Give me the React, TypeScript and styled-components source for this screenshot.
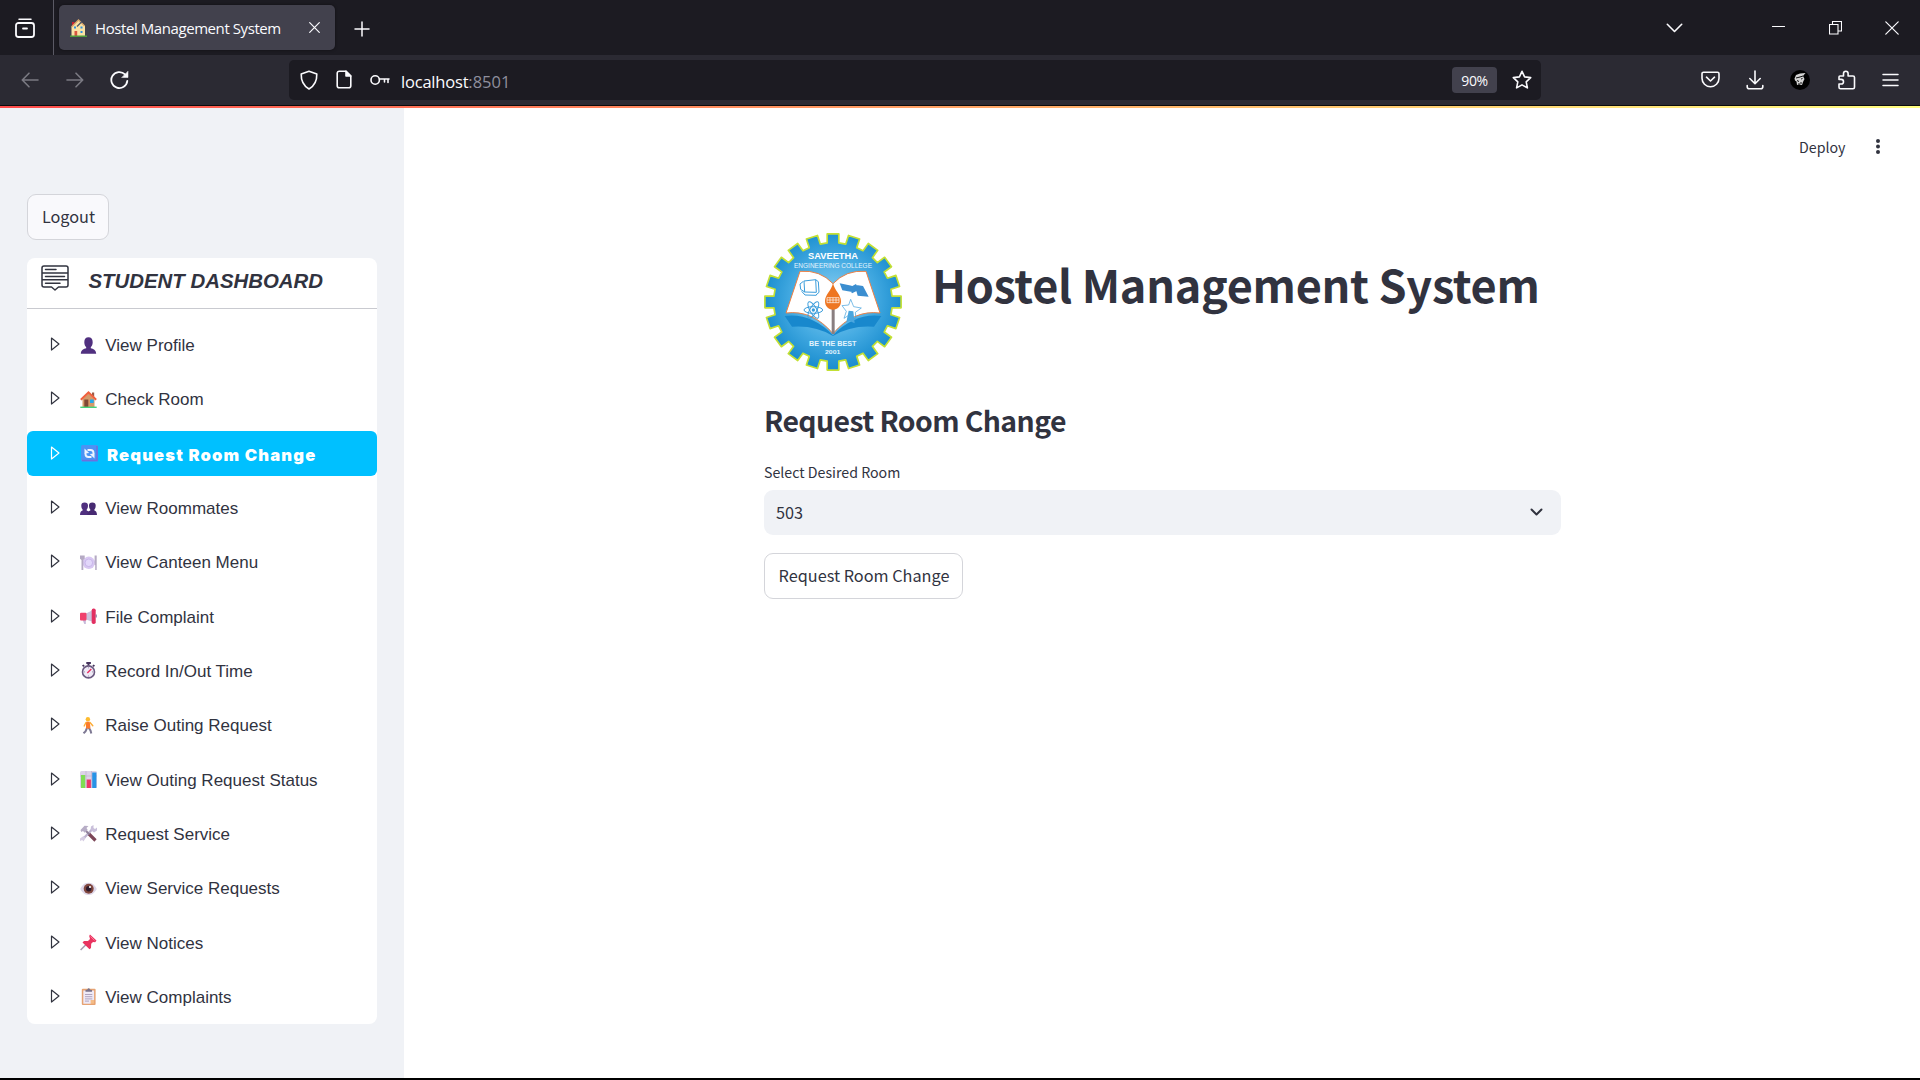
import React from "react";
import styled, { createGlobalStyle } from "styled-components";

const ui = `"Open Sans", "Noto Sans", sans-serif`;
const source = `"Noto Sans CJK SC", "Noto Sans", sans-serif`;
const arial = `"Liberation Sans", Arial, sans-serif`;
const ink = "#31333f";

const Global = createGlobalStyle`
  * { box-sizing: border-box; }
  body { margin: 0; background: #fff; overflow: hidden; }
  button { margin: 0; padding: 0; border: 0; background: none; font: inherit; color: inherit; }
`;

const Window = styled.div`
  width: 1920px;
  height: 1080px;
  display: flex;
  flex-direction: column;
  border-bottom: 2px solid #000;
  overflow: hidden;
`;

const TabStrip = styled.div`
  height: 55px;
  flex: none;
  display: flex;
  align-items: center;
  background: #1c1b22;
  color: #fbfbfe;
`;

const RecentSlot = styled.div`
  width: 54px;
  height: 55px;
  display: flex;
  align-items: center;
  padding-left: 15px;
  border-right: 1px solid #5b5a65;
`;

const Tab = styled.div`
  width: 276px;
  height: 45px;
  margin-left: 5px;
  padding: 0 14px 0 11px;
  display: flex;
  align-items: center;
  border-radius: 5px;
  background: #42414d;
  box-shadow: 0 0 3px rgba(0, 0, 0, 0.5);
`;

const TabTitle = styled.span`
  width: 206px;
  margin: 1px 8px 0 8px;
  font: 400 15px/20px ${ui};
  letter-spacing: -0.42px;
  white-space: nowrap;
`;

const NewTab = styled.button`
  display: flex;
  margin: 3px 0 0 19px;
`;

const WindowControls = styled.div`
  margin-left: auto;
  display: flex;
  align-items: center;
  padding-right: 21px;
`;

const ControlSlot = styled.button<{ $gap: number }>`
  display: flex;
  margin-right: ${(p) => p.$gap}px;
`;

const Toolbar = styled.div`
  height: 51px;
  flex: none;
  display: flex;
  align-items: center;
  padding: 0 21px 1px;
  background: #2b2a33;
  border-bottom: 1px solid #0c0c0d;
  color: #fbfbfe;
`;

const NavButtons = styled.div`
  width: 268px;
  display: flex;
  align-items: center;
  gap: 26.5px;
`;

const UrlBar = styled.div`
  width: 1252px;
  height: 40px;
  display: flex;
  align-items: center;
  padding: 0 9px 0 11px;
  border-radius: 5px;
  background: #1c1b22;
`;

const UrlIcons = styled.div`
  width: 101px;
  display: flex;
  align-items: center;
  gap: 18px;
`;

const Url = styled.span`
  padding-top: 4px;
  font: 400 16.5px/22px ${ui};
  letter-spacing: -0.2px;
  span { color: #8f8f9d; letter-spacing: 0; }
`;

const Zoom = styled.span`
  width: 45px;
  height: 26px;
  margin: 0 15px 0 auto;
  border-radius: 4px;
  background: #42414d;
  font: 400 14px/28px ${ui};
  letter-spacing: -0.4px;
  text-align: center;
`;

const ToolbarActions = styled.div`
  margin-left: auto;
  display: flex;
  align-items: center;
  gap: 26.3px;
`;

const Rainbow = styled.div`
  height: 2px;
  flex: none;
  background: linear-gradient(90deg, #ff4b4b, #fffd80);
`;

const Page = styled.div`
  flex: 1;
  min-height: 0;
  display: flex;
  background: #fff;
  color: ${ink};
`;

const Sidebar = styled.aside`
  width: 404px;
  padding: 86px 27px 0;
  background: #f0f2f6;
`;

const OutlineButton = styled.button<{ $width: number; $bg: string }>`
  display: block;
  width: ${(p) => p.$width}px;
  height: 46px;
  padding: 0 0 1px 1px;
  border: 1px solid #d4d5da;
  border-radius: 9px;
  background: ${(p) => p.$bg};
  font: 400 16.25px/43px ${source};
  white-space: nowrap;
`;

const MenuCard = styled.nav`
  height: 766px;
  margin-top: 18px;
  border-radius: 8px;
  background: #fff;
  font-family: ${arial};
`;

const MenuHeader = styled.div`
  height: 51px;
  display: flex;
  padding: 7px 0 0 13.500px;
  border-bottom: 1px solid #c9cad0;
`;

const MenuTitle = styled.h2`
  margin: 4px 0 0 20px;
  font: italic 700 20.4px/24px ${arial};
  white-space: nowrap;
`;

const MenuList = styled.ul`
  margin: 0;
  padding: 13px 0 0;
  list-style: none;
  display: flex;
  flex-direction: column;
  gap: 9.33px;
`;

const MenuItem = styled.li<{ $active: boolean }>`
  height: 45px;
  display: flex;
  align-items: center;
  padding-left: 23px;
  border-radius: 6px;
  background: ${(p) => (p.$active ? "#00c0ff" : "transparent")};
  color: ${(p) => (p.$active ? "#fff" : ink)};
`;

const Bullet = styled.span`
  display: flex;
  margin-bottom: 1px;
`;

const MenuIcon = styled.span<{ $active: boolean }>`
  display: flex;
  margin: 1px 0 0 ${(p) => (p.$active ? 21 : 20.3)}px;
`;

const MenuLabel = styled.span<{ $active: boolean }>`
  margin-left: ${(p) => (p.$active ? 9 : 8)}px;
  padding-top: 3px;
  font: ${(p) => (p.$active ? `900 16.6px/20px Inter, ${arial}` : `400 17px/20px ${arial}`)};
  letter-spacing: ${(p) => (p.$active ? "1.15px" : "0")};
  white-space: nowrap;
`;

const Main = styled.main`
  flex: 1;
  display: flex;
  flex-direction: column;
`;

const AppHeader = styled.header`
  height: 80px;
  display: flex;
  align-items: center;
  justify-content: flex-end;
  gap: 28px;
  padding: 0 38.500px 2px 0;
  font: 400 14.2px/20px ${source};
`;

const Content = styled.section`
  width: 797px;
  margin: 45px 0 0 360px;
  display: flex;
  flex-direction: column;
`;

const Brand = styled.div`
  display: flex;
  height: 138px;
`;

const AppTitle = styled.h1`
  margin: 16px 0 0 30px;
  font: 700 45px/70px ${source};
  letter-spacing: -0.3px;
  white-space: nowrap;
`;

const SectionTitle = styled.h2`
  margin: 29px 0 0;
  font: 700 28.4px/40px ${source};
  letter-spacing: -0.6px;
  white-space: nowrap;
`;

const FieldLabel = styled.label`
  margin-top: 22px;
  font: 400 14.2px/20px ${source};
`;

const SelectBox = styled.div`
  height: 45px;
  margin: 8px 0 18px;
  padding: 0 18px 0 12px;
  display: flex;
  align-items: center;
  justify-content: space-between;
  border-radius: 9px;
  background: #f0f2f6;
  font: 400 16.3px/24px ${source};
`;

const SelectValue = styled.span`
  padding-bottom: 2px;
`;

type Shape = { w: number; h: number; box?: string; sw?: number; children: React.ReactNode };
const Line = ({ w, h, box, sw = 1.6, children }: Shape) => (
  <svg width={w} height={h} viewBox={box || `0 0 ${w} ${h}`} fill="none" stroke="currentColor" strokeWidth={sw} strokeLinecap="round" strokeLinejoin="round">
    {children}
  </svg>
);

const Emoji = ({ children }: { children: React.ReactNode }) => (
  <svg width="17" height="17" viewBox="0 0 17 17">{children}</svg>
);

const person = "M4.3 5.2C4.3 2 5.8.3 8.5.3s4.2 1.7 4.2 4.9c0 2.300-.8 4-1.900 5v1c2.400.6 5.200 1.700 5.400 5.500H.8c.2-3.800 3-4.900 5.400-5.500v-1c-1.100-1-1.900-2.700-1.900-5z";

const emojis: Record<string, React.ReactNode> = {
  profile: <path d={person} fill="#50307f" />,
  house: (
    <>
      <path d="M2.500 8 8.500 2.500 14.500 8v8h-12z" fill="#d49a6a" />
      <path d="M12 1.500h2.200V6L12 4z" fill="#9c5a45" />
      <path d="M.8 8.800 8.500 1.500l7.700 7.300" fill="none" stroke="#f0603e" strokeWidth="2" />
      <path d="M4.300 8.500h4V16h-4z" fill="#804835" />
      <path d="M10 8.500h3.700v3.500H10z" fill="#28a8ea" />
      <path d="M.3 15.600h16.400V17H.3z" fill="#45d47b" />
    </>
  ),
  refresh: (
    <>
      <rect width="17" height="16.500" rx="1.500" fill="#4b93f3" />
      <path d="M1 15.500h15V1" fill="none" stroke="#6b70dd" strokeWidth="1.500" />
      <path d="M6.500 5h3q3 0 3 3v1M10.500 12h-3q-3 0-3-3V8" fill="none" stroke="#eef4ff" strokeWidth="1.900" />
      <path d="M3.500 3.500v5l4.700-.5zM13.500 13.500v-5l-4.700.5z" fill="#eef4ff" />
    </>
  ),
  mates: (
    <>
      <path d="M1.300 6.600c0-2 1-3.100 3.300-3.100S8 4.600 8 6.600c0 1.900-.5 3.100-1.300 4v.8c1.700.4 3 1.500 3 4.600H0c0-3.100 1.100-4.200 2.600-4.600v-.8c-.8-.9-1.300-2.100-1.300-4z" fill="#50307f" />
      <path d="M9 6.600c0-2 1-3.100 3.300-3.100s3.400 1.100 3.400 3.100c0 1.900-.5 3.100-1.300 4v.8c1.500.4 2.600 1.500 2.600 4.600H7.300c0-3.100 1.300-4.200 3-4.600v-.8C9.500 9.700 9 8.500 9 6.600z" fill="#472a72" />
    </>
  ),
  plate: (
    <>
      <circle cx="8.800" cy="8.800" r="6.200" fill="#d8c7f2" />
      <circle cx="8.800" cy="8.800" r="3.800" fill="#e2d6fa" stroke="#c3b0e6" strokeWidth=".8" />
      <path d="M0 1.500h4.700v3.200L3.300 6v10H1.500V6L0 4.700zM14.600 1.500h2.100V16h-1.500v-5h-.6z" fill="#b5aac4" />
    </>
  ),
  horn: (
    <>
      <path d="M6 5.500 13 2v12L6 11.500z" fill="#cbc2dc" />
      <path d="M2.300 11h3.500v5H4.300z" fill="#c6b9da" />
      <rect y="4.800" width="6.500" height="7.700" rx="1" fill="#f0406c" />
      <rect x="11.700" y=".5" width="4" height="15.500" rx="1.800" fill="#e22f61" />
      <path d="M15.700 6.500h1v3h-1z" fill="#7c6a91" />
    </>
  ),
  timer: (
    <>
      <path d="M6.300 0h4.600v2H9.500v2h-2V2H6.300zM2 3.500l1.500-1 1.200 1.300-1.500 1.200zM15 3.500l-1.500-1-1.200 1.300 1.500 1.200z" fill="#46345d" />
      <circle cx="8.500" cy="9.900" r="6" fill="#efeaf6" stroke="#6b5a80" strokeWidth="1.600" />
      <path d="M8.500 5.300v1M8.500 13.500v1M4 9.900h1M12 9.900h1" stroke="#8a7c9c" strokeWidth=".8" />
      <path d="m7.300 11.100 4-4" stroke="#ed2e63" strokeWidth="1.400" />
    </>
  ),
  walk: (
    <>
      <circle cx="7.900" cy="2.300" r="2.200" fill="#fdbb2e" />
      <path d="m7 11-1.500 3.500-2 1.800M8.500 10.500l2 3 .8 3" fill="none" stroke="#7d7893" strokeWidth="2" />
      <path d="M6 4.700h3.800l.7 6.800H6z" fill="#fb7a2c" />
      <path d="M6 5.500 4.200 9M10 5.500l2.800 3.300" stroke="#fdac35" strokeWidth="1.400" strokeLinecap="round" />
    </>
  ),
  chart: (
    <>
      <rect width="17" height="17" rx="1.500" fill="#ddd3e8" />
      <path d="M0 5h17M6 0v17M11.500 0v17" stroke="#bfb2cf" strokeWidth=".7" />
      <path d="M1 4h4.200v13H1z" fill="#7fdc54" />
      <path d="M6.700 8.500h4.200V17H6.700z" fill="#ec3569" />
      <path d="M12.200 1.500h4.200V17h-4.200z" fill="#2893e6" />
    </>
  ),
  tools: (
    <>
      <path d="m3 14 9.500-10" stroke="#bdb2cf" strokeWidth="2.300" />
      <path d="M10.500 5 11 1.500 13.500 0v3l1.500 1 2-1.500v3L14 7.500z" fill="#c9bfda" />
      <path d="M0 13.500 3.500 11l2 2-2 3.500-1.300-1.500L0 16z" fill="#d6cee3" />
      <path d="m9 9 6.500 6.500" stroke="#7c4657" strokeWidth="3.200" />
      <path d="m5 5 4.500 4.500" stroke="#8f8199" strokeWidth="2" />
      <path d="M.5 5 4.500.8 8.500 1l-2 2 1.200 2-3 2.700-1.700-1.700-1.700 1z" fill="#b7adc6" />
    </>
  ),
  eye: (
    <>
      <path d="M.2 9C3 3.500 6 2.800 8.500 2.800S14 3.500 16.800 9C14 14 11 15 8.500 15S3 14 .2 9z" fill="#ded7e9" />
      <circle cx="8.700" cy="8.800" r="5" fill="#81483f" />
      <circle cx="8.700" cy="8.800" r="2.700" fill="#2d1a2c" />
      <circle cx="10" cy="7" r="1.100" fill="#fff" />
    </>
  ),
  pin: (
    <>
      <path d="m.6 16 6-6" stroke="#a49ab0" strokeWidth="1.500" />
      <path d="m10 .5 6.500 6-1.300 1.700-2.200-.2-1.800 1.800-.2 4.200-1.500 1.200-7-6.700 1.500-1.500 4 .1L10 5 9.200 2z" fill="#e93460" />
      <path d="m10.500 2.500 4 4" stroke="#ff7896" />
    </>
  ),
  clipboard: (
    <>
      <rect x="1.800" y=".7" width="13.800" height="16.300" rx="1" fill="#e6a272" />
      <path d="M3.300 2.500h10.800v9.500l-3.500 3.700H3.300z" fill="#eee9f6" />
      <path d="M5 6.500h7.300M5 8.700h7.300M5 10.900h7.300M5 13.100h4" stroke="#a99cba" strokeWidth=".9" />
      <path d="M14.100 12v3.700h-3.500V12z" fill="#f5bc86" />
      <path d="M5.500 3.700V2l1.700-.3Q8.700-1 10.200 1.700L12 2v1.700z" fill="#79728a" />
    </>
  ),
};

const items: [string, string][] = [
  ["profile", "View Profile"],
  ["house", "Check Room"],
  ["refresh", "Request Room Change"],
  ["mates", "View Roommates"],
  ["plate", "View Canteen Menu"],
  ["horn", "File Complaint"],
  ["timer", "Record In/Out Time"],
  ["walk", "Raise Outing Request"],
  ["chart", "View Outing Request Status"],
  ["tools", "Request Service"],
  ["eye", "View Service Requests"],
  ["pin", "View Notices"],
  ["clipboard", "View Complaints"],
];

const gear = Array.from({ length: 20 }, (_, i) => {
  const point = (deg: number, r: number) => {
    const a = ((i * 18 + deg - 90) * Math.PI) / 180;
    return `${(250 + r * Math.cos(a)).toFixed(1)},${(246 + r * Math.sin(a)).toFixed(1)}`;
  };
  return [point(-5.6, 178), point(-4.9, 205), point(4.9, 205), point(5.6, 178)].join(" ");
}).join(" ");

const CollegeLogo = () => (
  <svg width="138" height="138" viewBox="43 39 414 414">
    <defs>
      <radialGradient id="disc" cx="50%" cy="48%" r="50%">
        <stop offset="0" stopColor="#8fd0f2" />
        <stop offset=".6" stopColor="#45abe2" />
        <stop offset="1" stopColor="#1d8fd0" />
      </radialGradient>
    </defs>
    <polygon points={gear} fill="url(#disc)" stroke="#c3e034" strokeWidth="5" strokeLinejoin="round" />
    <path d="M105 288q80-10 145 58 65-68 145-58l-22 32q-70-5-123 28-53-33-123-28z" fill="#1888cd" />
    <path d="M151 154q60-5 99 37 39-42 99-37l42 125q-80-10-141 62-61-72-141-62z" fill="#fff" stroke="#ee8145" strokeWidth="3" />
    <path d="M246 262h9v80h-9z" fill="#8a7f80" />
    <path d="M250 189c5 24 24 34 24 55 0 15-10 25-24 25s-24-10-24-25c0-21 19-31 24-55z" fill="#ee7622" />
    <path d="M232 233h36v15h-36zM241 233v15M250 233v15M259 233v15M232 240h36" fill="none" stroke="#fff" strokeWidth="2" />
    <g fill="none" stroke="#3b9ddb" strokeWidth="3">
      <path d="M163 183l35-4 8 6 2 32-9 8M163 183l2 33 35 1-2-38M165 216l-12-8-2-16 10-8M156 214l10 11 34 1" />
      <ellipse cx="191" cy="270" rx="28" ry="10" />
      <ellipse cx="191" cy="270" rx="28" ry="10" transform="rotate(60 191 270)" />
      <ellipse cx="191" cy="270" rx="28" ry="10" transform="rotate(120 191 270)" />
      <path d="m303 238 9 22 23 4-18 13 2 22-19-15-17 11 7-21-13-17 20-2z" strokeWidth="2" />
    </g>
    <circle cx="191" cy="270" r="5" fill="#3b9ddb" />
    <path d="m270 190 36 7 6 20-34-6zM315 194l25 4 17 32-33-3zM297 204l22-12 8 18-20 10z" fill="#3b8ed0" />
    <path d="m297 272 14 2 4 36-15-7-10 4z" fill="#4aa6de" />
    <g fill="#fff" textAnchor="middle" fontFamily="Liberation Sans, Arial, sans-serif">
      <text x="250" y="116" fontSize="26" fontWeight="700" textLength="150" lengthAdjust="spacingAndGlyphs">SAVEETHA</text>
      <text x="250" y="143" fontSize="19" textLength="234" lengthAdjust="spacingAndGlyphs" fill="#e4f4fd">ENGINEERING COLLEGE</text>
      <text x="249" y="378" fontSize="19" fontWeight="700" textLength="142" lengthAdjust="spacingAndGlyphs" fill="#e4f4fd">BE THE BEST</text>
      <text x="249" y="402" fontSize="18" fontWeight="700" textLength="46" lengthAdjust="spacingAndGlyphs" fill="#e4f4fd">2001</text>
    </g>
  </svg>
);

const Favicon = () => (
  <svg width="17" height="18" viewBox="0 0 17 18">
    <path d="M2 3h2.500v5H2z" fill="#c4202f" />
    <path d="M1.500 17V8L8.500 1l6.500 6v10z" fill="#fbe2a4" />
    <path d="M1.500 8 8.500 1l6 6" fill="none" stroke="#d9a76b" strokeWidth="1.300" />
    <path d="m7 7.500 5-5" stroke="#4b5568" strokeWidth="1.200" />
    <path d="M4 7.500h2v2H4zM10.500 7.500h2v2h-2zM10.500 12h2v2h-2z" fill="#2f93e0" />
    <path d="M4.500 12h2.700v5H4.500z" fill="#d8553f" />
    <path d="M0 16.500h17V18H0z" fill="#4f9c3c" />
  </svg>
);

export default function App() {
  return (
    <>
      <Global />
      <Window>
        <TabStrip>
          <RecentSlot>
            <Line w={20} h={20} sw={1.8}>
              <path d="M4 1.200h12" strokeWidth="1.500" />
              <path d="M3.500 5h13a2.500 2.500 0 0 1 2.500 2.500v9a2.500 2.500 0 0 1-2.500 2.500h-13A2.500 2.500 0 0 1 1 16.500v-9A2.500 2.500 0 0 1 3.500 5zM8 10.500h4" />
            </Line>
          </RecentSlot>
          <Tab>
            <Favicon />
            <TabTitle>Hostel Management System</TabTitle>
            <Line w={11} h={11} sw={1.200}><path d="m.7.7 9.600 9.600M10.300.7.7 10.300" /></Line>
          </Tab>
          <NewTab><Line w={16} h={16} sw={1.500}><path d="M8 1v14M1 8h14" /></Line></NewTab>
          <WindowControls>
            <ControlSlot $gap={89}><Line w={17} h={10}><path d="m1.300 1.300 7.200 7.200 7.200-7.200" /></Line></ControlSlot>
            <ControlSlot $gap={44}><Line w={13} h={3} sw={1.100}><path d="M.5.500h12" /></Line></ControlSlot>
            <ControlSlot $gap={43}><Line w={13} h={14} sw={1.100}><path d="M.5 3.500h8.500v9.500H.5zM3.500 3.500V.500h9v9.500H9" strokeLinejoin="miter" /></Line></ControlSlot>
            <ControlSlot $gap={0}><Line w={14} h={14} sw={1.200}><path d="m.8.8 12.400 12.400M13.200.8.8 13.200" /></Line></ControlSlot>
          </WindowControls>
        </TabStrip>
        <Toolbar>
          <NavButtons>
            <Line w={18} h={16}><path d="M17 8H1.500M8 1.200 1.300 8 8 14.800" stroke="#7b7a83" /></Line>
            <Line w={18} h={16}><path d="M1 8h15.500M10 1.200 16.700 8 10 14.800" stroke="#7b7a83" /></Line>
            <Line w={20} h={20} sw={1.800}>
              <path d="M17.300 10.800A8 8 0 1 1 15 4.400" />
              <path d="M18 1.500v6h-6z" fill="currentColor" strokeWidth="0.500" />
            </Line>
          </NavButtons>
          <UrlBar>
            <UrlIcons>
              <Line w={18} h={20}><path d="M9 1.200 16.800 4c.2 6.500-1.800 11.500-7.800 15C3 15.500 1 10.500 1.200 4z" /></Line>
              <Line w={16} h={19}>
                <path d="M3 1.200h7L14.800 6v9.800a2 2 0 0 1-2 2H3.200a2 2 0 0 1-2-2V3.200a2 2 0 0 1 2-2z" />
                <path d="M10 1.200V6h4.800z" fill="currentColor" />
              </Line>
              <Line w={20} h={12}><circle cx="5.200" cy="6" r="4.200" /><path d="M9.500 5h9.500M18 5v3.500M14.500 5v3" /></Line>
            </UrlIcons>
            <Url>localhost<span>:8501</span></Url>
            <Zoom>90%</Zoom>
            <Line w={20} h={20}><path d="m10 1.300 2.600 5.600 6.100.700-4.500 4.200 1.200 6.100-5.400-3-5.400 3 1.200-6.100L1.300 7.600l6.100-.7z" /></Line>
          </UrlBar>
          <ToolbarActions>
            <Line w={19} h={17}><path d="M2.500 1.200h14a1.500 1.500 0 0 1 1.500 1.500v4.500a8.500 8.500 0 0 1-17 0V2.700a1.500 1.500 0 0 1 1.500-1.500zM5.500 6.200l4 3.800 4-3.800" /></Line>
            <Line w={18} h={20}><path d="M9 1v12.500M3.800 8.500 9 13.700l5.200-5.200M1.200 15.500v1.300a2 2 0 0 0 2 2h11.600a2 2 0 0 0 2-2v-1.300" /></Line>
            <svg width="20" height="20" viewBox="0 0 20 20">
              <circle cx="10" cy="10" r="10" fill="#000" />
              <path d="M4.500 8.500 6 5l4-1.500 5.500-.5-2.500 3 1.500 3-1.500 3-1 3-3-.5-2 .5-.5-3.500-1.500-1z" fill="#d4d4d4" />
              <path d="m6 8 4-1 3-1M9 13v2M11 12v2M7 10.500l2 1M11 9l1.500-.5" stroke="#111" />
            </svg>
            <Line w={19} h={20}><path d="M3 6h3.500V3.500a2.300 2.300 0 0 1 4.600 0V6H16a1.500 1.500 0 0 1 1.500 1.500v9.800A1.500 1.500 0 0 1 16 18.800H3.500A1.500 1.500 0 0 1 2 17.300V14h2.200a2.300 2.300 0 0 0 0-4.600H2V7a1 1 0 0 1 1-1z" /></Line>
            <Line w={17} h={14} sw={1.500}><path d="M1 1.500h15M1 7h15M1 12.500h15" /></Line>
          </ToolbarActions>
        </Toolbar>
        <Rainbow />
        <Page>
          <Sidebar>
            <OutlineButton $width={82} $bg="#f9f9fc">Logout</OutlineButton>
            <MenuCard>
              <MenuHeader>
                <Line w={28} h={26} sw={1.500}>
                  <path d="M3 1h22a2 2 0 0 1 2 2v17a2 2 0 0 1-2 2h-7.500L14 25l-3.500-3H3a2 2 0 0 1-2-2V3a2 2 0 0 1 2-2zM1 8h26M1 14.800h26M4.500 4.500H15M4.500 11.400h19M4.500 18.200H19" />
                </Line>
                <MenuTitle>STUDENT DASHBOARD</MenuTitle>
              </MenuHeader>
              <MenuList>
                {items.map(([icon, label]) => {
                  const active = icon === "refresh";
                  return (
                    <MenuItem key={icon} $active={active}>
                      <Bullet><Line w={10} h={14} sw={1.200}><path d="M1.500 1 9 7l-7.500 6z" /></Line></Bullet>
                      <MenuIcon $active={active}><Emoji>{emojis[icon]}</Emoji></MenuIcon>
                      <MenuLabel $active={active}>{label}</MenuLabel>
                    </MenuItem>
                  );
                })}
              </MenuList>
            </MenuCard>
          </Sidebar>
          <Main>
            <AppHeader>
              <span>Deploy</span>
              <svg width="8" height="18" viewBox="0 0 8 18" fill={ink}>
                <circle cx="4" cy="3" r="2" /><circle cx="4" cy="8.500" r="2" /><circle cx="4" cy="14" r="2" />
              </svg>
            </AppHeader>
            <Content>
              <Brand>
                <CollegeLogo />
                <AppTitle>Hostel Management System</AppTitle>
              </Brand>
              <SectionTitle>Request Room Change</SectionTitle>
              <FieldLabel>Select Desired Room</FieldLabel>
              <SelectBox>
                <SelectValue>503</SelectValue>
                <Line w={13} h={9} sw={2}><path d="m1.500 1.500 5 5 5-5" /></Line>
              </SelectBox>
              <OutlineButton $width={199} $bg="#fff">Request Room Change</OutlineButton>
            </Content>
          </Main>
        </Page>
      </Window>
    </>
  );
}
